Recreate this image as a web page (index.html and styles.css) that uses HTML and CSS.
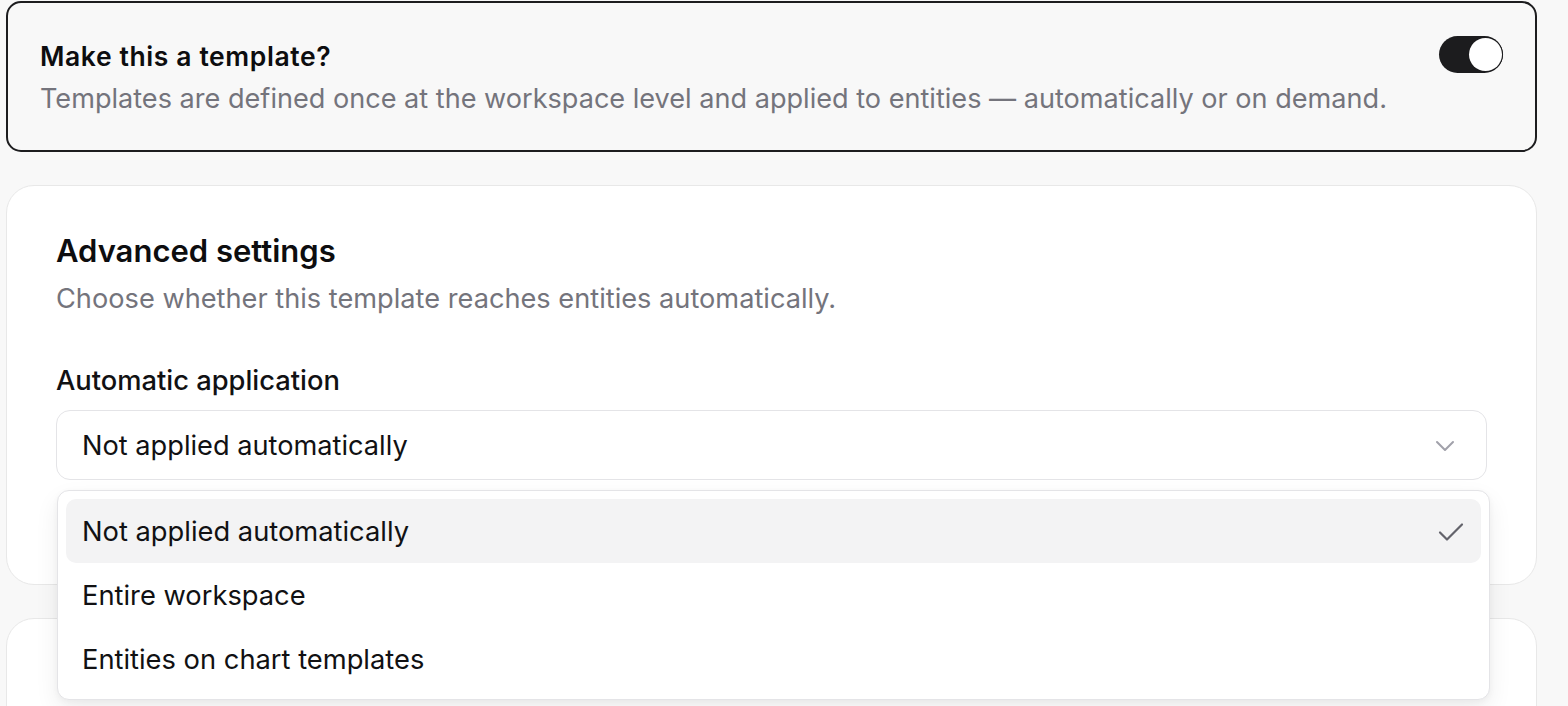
FILE: index.html
```html
<!DOCTYPE html>
<html lang="en">
<head>
<meta charset="utf-8">
<title>Template settings</title>
<link rel="stylesheet" href="styles.css">
</head>
<body>
<main class="page">
  <section class="template-card">
    <div class="template-text">
      <h2 class="template-title">Make this a template?</h2>
      <p class="template-desc">Templates are defined once at the workspace level and applied to entities — automatically or on demand.</p>
    </div>
    <button class="switch is-on" type="button" role="switch" aria-checked="true" aria-label="Make this a template">
      <span class="switch-knob"></span>
    </button>
  </section>

  <section class="panel">
    <h3 class="panel-title">Advanced settings</h3>
    <p class="panel-desc">Choose whether this template reaches entities automatically.</p>

    <div class="field">
      <label class="field-label">Automatic application</label>
      <div class="select-wrap">
        <div class="select">
          <span class="select-value">Not applied automatically</span>
          <svg class="chevron" width="20" height="12" viewBox="0 0 20 12" aria-hidden="true">
            <path d="M2 2l8 8 8-8" fill="none" stroke="#a1a1aa" stroke-width="2" stroke-linecap="round" stroke-linejoin="round"/>
          </svg>
        </div>
        <ul class="menu" role="listbox">
          <li class="menu-item is-selected" role="option" aria-selected="true">
            <span>Not applied automatically</span>
            <svg class="check" width="26" height="20" viewBox="0 0 26 20" aria-hidden="true">
              <path d="M2 10.5l7 7L24 2.5" fill="none" stroke="#63636b" stroke-width="2.2" stroke-linecap="round" stroke-linejoin="round"/>
            </svg>
          </li>
          <li class="menu-item" role="option">Entire workspace</li>
          <li class="menu-item" role="option">Entities on chart templates</li>
        </ul>
      </div>
    </div>
  </section>

  <section class="panel panel-next"></section>
</main>
</body>
</html>
```

FILE: styles.css
```css
* {
  box-sizing: border-box;
}

html, body {
  margin: 0;
  padding: 0;
  background: #f8f8f8;
}

body {
  font-family: "Inter", "Noto Sans", "Liberation Sans", sans-serif;
  color: #111113;
  -webkit-font-smoothing: antialiased;
}

.page {
  width: 1531px;
  margin-left: 6px;
  padding-top: 1px;
  display: flex;
  flex-direction: column;
  gap: 33px;
}

/* Template toggle card */
.template-card {
  display: flex;
  align-items: flex-start;
  justify-content: space-between;
  border: 2px solid #1d1d1f;
  border-radius: 15px;
  padding: 37px 32px 33px 32px;
  background: #f8f8f8;
}

.template-title {
  margin: 0;
  font-size: 26.5px;
  line-height: 32px;
  font-weight: 600;
  letter-spacing: 0.6px;
  color: #0d0d0f;
}

.template-desc {
  margin: 9px 0 0;
  font-size: 27.1px;
  line-height: 36px;
  color: #74747c;
}

.switch {
  position: relative;
  flex: none;
  width: 64px;
  height: 37px;
  margin-top: -4px;
  padding: 0;
  border: none;
  border-radius: 999px;
  background: #1c1c1e;
  cursor: pointer;
}

.switch-knob {
  position: absolute;
  top: 2px;
  right: 1px;
  width: 33px;
  height: 33px;
  border-radius: 50%;
  background: #ffffff;
  box-shadow: 0 0 0 1px #1c1c1e;
}

/* Settings panels */
.panel {
  background: #ffffff;
  border: 1px solid #e8e8e8;
  border-radius: 28px;
  padding: 45px 49px 104px 49px;
}

.panel-title {
  margin: 0;
  font-size: 31px;
  line-height: 40px;
  font-weight: 600;
  color: #0d0d0f;
}

.panel-desc {
  margin: 10px 0 0;
  font-size: 27.2px;
  line-height: 36px;
  color: #74747c;
}

.field {
  margin-top: 46px;
  display: flex;
  flex-direction: column;
  gap: 11px;
}

.field-label {
  font-size: 27.3px;
  line-height: 36px;
  font-weight: 500;
  color: #111113;
}

.select-wrap {
  position: relative;
}

.select {
  height: 70px;
  display: flex;
  align-items: center;
  justify-content: space-between;
  border: 1px solid #e4e4e7;
  border-radius: 14px;
  padding: 1px 31px 0 25px;
  background: #ffffff;
}

.select-value {
  font-size: 27.2px;
  line-height: 36px;
}

/* Open option list */
.menu {
  position: absolute;
  top: 80px;
  left: 1px;
  right: -3px;
  z-index: 2;
  margin: 0;
  padding: 8px;
  list-style: none;
  background: #ffffff;
  border: 1px solid #e4e4e7;
  border-radius: 12px;
  box-shadow: 0 10px 24px rgba(0, 0, 0, 0.07), 0 2px 6px rgba(0, 0, 0, 0.04);
}

.menu-item {
  height: 64px;
  display: flex;
  align-items: center;
  justify-content: space-between;
  padding: 1px 17px 0 16px;
  border-radius: 10px;
  font-size: 27.3px;
  line-height: 36px;
  color: #111113;
}

.menu-item.is-selected {
  background: #f3f3f4;
}

.panel-next {
  height: 200px;
  padding: 0;
}
```
